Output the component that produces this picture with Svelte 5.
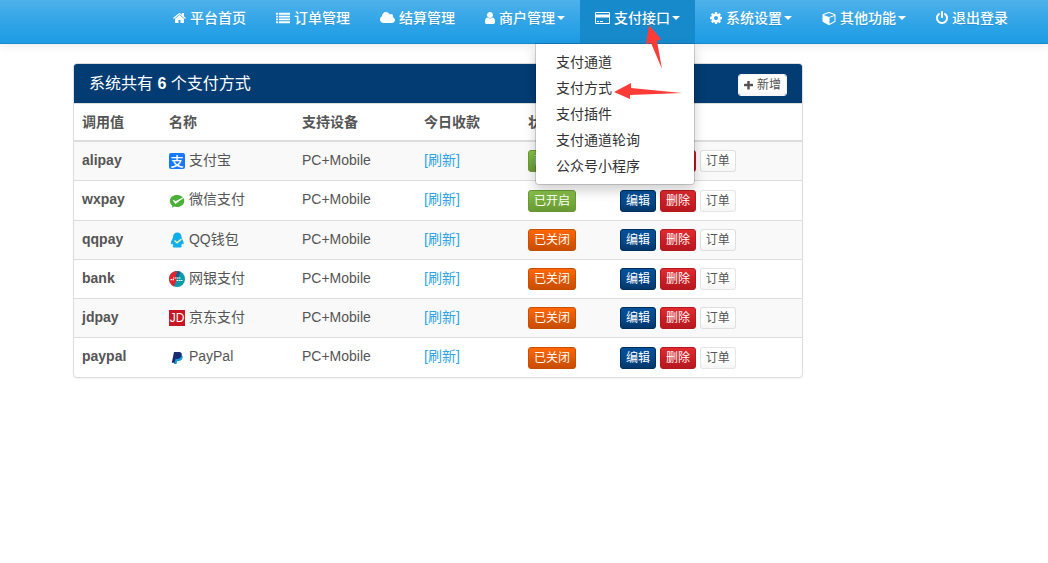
<script lang="ts">
  type Icon = { w: number; d: string };

  const icons: Record<string, Icon> = {
    home: { w: 13, d: 'M1472 992v480q0 26-19 45t-45 19h-384v-384h-256v384h-384q-26 0-45-19t-19-45v-480q0-1 .5-3t.5-3l575-474 575 474q1 2 1 6zm223-69l-62 74q-8 9-21 11h-3q-13 0-21-7l-692-577-692 577q-12 8-24 7-13-2-21-11l-62-74q-8-10-7-23.5t11-21.5l719-599q32-26 76-26t76 26l244 204v-195q0-14 9-23t23-9h192q14 0 23 9t9 23v408l219 182q10 8 11 21.5t-7 23.5z' },
    list: { w: 14, d: 'M0 192h256v256h-256zM384 192h1536v256h-1536zM0 576h256v256h-256zM384 576h1536v256h-1536zM0 960h256v256h-256zM384 960h1536v256h-1536zM0 1344h256v256h-256zM384 1344h1536v256h-1536z' },
    cloud: { w: 15, d: 'M1984 1152q0 159-112.5 271.5t-271.5 112.5h-1088q-185 0-316.5-131.5t-131.5-316.5q0-132 71-241.5t187-163.5q-2-28-2-43 0-212 150-362t362-150q158 0 286.5 88t187.5 230q70-62 166-62 106 0 181 75t75 181q0 75-41 138 129 30 213 134.5t84 239.5z' },
    user: { w: 10, d: 'M1536 1399q0 109-62.5 187t-150.5 78h-854q-88 0-150.5-78t-62.5-187q0-85 8.5-160.5t31.5-152 58.5-131 94-89 134.5-34.5q131 128 313 128t313-128q76 0 134.5 34.5t94 89 58.5 131 31.5 152 8.5 160.5zm-256-887q0 159-112.5 271.5t-271.5 112.5-271.5-112.5-112.5-271.5 112.5-271.5 271.5-112.5 271.5 112.5 112.5 271.5z' },
    card: { w: 15, d: 'M1760 128q66 0 113 47t47 113v1216q0 66-47 113t-113 47h-1600q-66 0-113-47t-47-113v-1216q0-66 47-113t113-47h1600zm-1600 128q-13 0-22.5 9.5t-9.5 22.5v224h1664v-224q0-13-9.5-22.5t-22.5-9.5h-1600zm1600 1280q13 0 22.5-9.5t9.5-22.5v-736h-1664v736q0 13 9.5 22.5t22.5 9.5h1600zM128 448h1664v384h-1664zm128 960v-128h256v128h-256zm384 0v-128h384v128h-384z' },
    cog: { w: 12, d: 'M1152 896q0-106-75-181t-181-75-181 75-75 181 75 181 181 75 181-75 75-181zm512-109v222q0 12-8 23t-20 13l-185 28q-19 54-39 91 35 50 107 138 10 12 10 25t-9 23q-27 37-99 108t-94 71q-12 0-26-9l-138-108q-44 23-91 38-16 136-29 186-7 28-36 28h-222q-14 0-24.5-8.5t-11.5-21.5l-28-184q-49-16-90-37l-141 107q-10 9-25 9-14 0-25-11-126-114-165-168-7-10-7-23 0-12 8-23 15-21 51-66.5t54-70.5q-27-50-41-99l-183-27q-13-2-21-12.5t-8-23.5v-222q0-12 8-23t19-13l186-28q14-46 39-92-40-57-107-138-10-12-10-24 0-10 9-23 26-36 98.5-107.5t94.5-71.5q13 0 26 10l138 107q44-23 91-38 16-136 29-186 7-28 36-28h222q14 0 24.5 8.5t11.5 21.5l28 184q49 16 90 37l142-107q9-9 24-9 13 0 25 10 129 119 165 170 7 8 7 22 0 12-8 23-15 21-51 66.5t-54 70.5q26 50 41 98l183 28q13 2 21 12.5t8 23.5z' },
    cube: { w: 14, d: 'M896 1629l640-349v-636l-640 233v752zm-64-865l698-254-698-254-698 254zm832-252v768q0 35-18 65t-49 47l-704 384q-28 16-61 16t-61-16l-704-384q-31-17-49-47t-18-65v-768q0-40 23-73t61-47l704-256q22-8 44-8t44 8l704 256q38 14 61 47t23 73z' },
    power: { w: 12, d: 'M1664 896q0 156-61 298t-164 245-245 164-298 61-298-61-245-164-164-245-61-298q0-182 80.5-343t226.5-270q43-32 95.5-25t83.5 50q32 42 24.5 94.5t-49.5 84.5q-98 74-151.5 181t-53.5 228q0 104 40.5 198.5t109.5 163.5 163.5 109.5 198.5 40.5 198.5-40.5 163.5-109.5 109.5-163.5 40.5-198.5q0-121-53.5-228t-151.5-181q-42-32-49.5-84.5t24.5-94.5q31-43 84-50t95 25q146 109 226.5 270t80.5 343zm-640-768v640q0 52-38 90t-90 38-90-38-38-90v-640q0-52 38-90t90-38 90 38 38 90z' }
  };

  // left edge and width of each glyph in its 1792 unit em
  const boxes: Record<string, string> = {
    home: '64 0 1664 1792',
    list: '0 0 1920 1792',
    cloud: '64 0 1920 1792',
    user: '256 0 1280 1792',
    card: '0 0 1920 1792',
    cog: '128 0 1536 1792',
    cube: '0 0 1664 1792',
    power: '128 0 1536 1792'
  };

  const nav = [
    { label: '平台首页', icon: 'home' },
    { label: '订单管理', icon: 'list' },
    { label: '结算管理', icon: 'cloud' },
    { label: '商户管理', icon: 'user', caret: true },
    {
      label: '支付接口',
      icon: 'card',
      caret: true,
      menu: ['支付通道', '支付方式', '支付插件', '支付通道轮询', '公众号小程序']
    },
    { label: '系统设置', icon: 'cog', caret: true },
    { label: '其他功能', icon: 'cube', caret: true },
    { label: '退出登录', icon: 'power' }
  ];

  let openMenu = $state('支付接口');

  let types = $state([
    { key: 'alipay', name: '支付宝', device: 'PC+Mobile', on: true },
    { key: 'wxpay', name: '微信支付', device: 'PC+Mobile', on: true },
    { key: 'qqpay', name: 'QQ钱包', device: 'PC+Mobile', on: false },
    { key: 'bank', name: '网银支付', device: 'PC+Mobile', on: false },
    { key: 'jdpay', name: '京东支付', device: 'PC+Mobile', on: false },
    { key: 'paypal', name: 'PayPal', device: 'PC+Mobile', on: false }
  ]);
</script>

<nav class="navbar">
  <ul class="nav">
    {#each nav as item}
      <li class:open={item.label === openMenu}>
        <a href="#nav" class="nav-link" onclick={() => (openMenu = item.label)}>
          <svg class="fa" style="width: {icons[item.icon].w}px" viewBox={boxes[item.icon]} aria-hidden="true">
            <path d={icons[item.icon].d} />
          </svg>
          <span>{item.label}</span>
          {#if item.caret}<b class="caret"></b>{/if}
        </a>
        {#if item.menu && item.label === openMenu}
          <ul class="dropdown">
            {#each item.menu as entry}
              <li><a href="#menu">{entry}</a></li>
            {/each}
          </ul>
          <svg class="arrows" width="160" height="80" viewBox="535 0 160 80" aria-hidden="true">
            <path d="M649 25L661 39L657 41L662 69L651 43L646 44Z" />
          </svg>
          <svg class="arrows second" width="80" height="24" viewBox="610 80 80 24" aria-hidden="true">
            <path d="M614 92L631 83L631 88L682 93L630 95L630 99Z" />
          </svg>
        {/if}
      </li>
    {/each}
  </ul>
</nav>

<main>
  <section class="panel">
    <header class="panel-heading">
      <h3>系统共有 <b>{types.length}</b> 个支付方式</h3>
      <button class="btn default add">
        <svg class="plus" viewBox="192 192 1408 1408" aria-hidden="true">
          <path d="M1600 736v192q0 40-28 68t-68 28h-416v416q0 40-28 68t-68 28h-192q-40 0-68-28t-28-68v-416h-416q-40 0-68-28t-28-68v-192q0-40 28-68t68-28h416v-416q0-40 28-68t68-28h192q40 0 68 28t28 68v416h416q40 0 68 28t28 68z" />
        </svg>
        新增
      </button>
    </header>
    <table>
      <colgroup>
        <col class="c-key" />
        <col class="c-name" />
        <col class="c-device" />
        <col class="c-income" />
        <col class="c-state" />
        <col />
      </colgroup>
      <thead>
        <tr><th>调用值</th><th>名称</th><th>支持设备</th><th>今日收款</th><th>状态</th><th>操作</th></tr>
      </thead>
      <tbody>
        {#each types as t}
          <tr>
            <td><b>{t.key}</b></td>
            <td>
              <svg class="logo" viewBox="0 0 16 16" aria-hidden="true">
                {#if t.key === 'alipay'}
                  <rect width="16" height="16" rx="2" fill="#1677ff" />
                  <text x="8" y="13" text-anchor="middle" font-size="13" font-weight="500" fill="#fff">支</text>
                {:else if t.key === 'wxpay'}
                  <path d="M8 2C3.9 2 .8 4.600.8 8c0 1.900 1 3.500 2.500 4.500L3 14.700l2.400-1.200c.8.3 1.700.4 2.600.4 4.100 0 7.300-2.600 7.300-6S12.100 2 8 2z" fill="#4caf3a" />
                  <path d="M4.200 7.300l2.300 3.200L14.500 4.500 6.800 8.600z" fill="#fff" stroke="#fff" stroke-width=".8" />
                {:else if t.key === 'qqpay'}
                  <path d="M8.300.5C5.600.5 4 2.500 4 5.200c0 1.500-2.200 3.700-2.200 6 0 1.200.8 1.300 1.500.3.200.8.500 1.500 1.100 2.100-.9.300-1.200 1.900.6 1.900h6.400c1.700 0 1.500-1.600.7-1.900.6-.6.900-1.300 1.100-2.100.8 1 1.500.9 1.500-.3 0-2.300-2.100-4.500-2.100-6C12.600 2.500 11 .5 8.300.5z" fill="#10aeea" />
                  <path d="M5.500 8.500l2.500 2.200 4.500-3.500" fill="none" stroke="#e9efb0" stroke-width="1.500" />
                {:else if t.key === 'bank'}
                  <circle cx="8" cy="8" r="8" fill="#0b9aa8" />
                  <path d="M8 0A8 8 0 0 0 5 15.400L7.500 8z" fill="#e5212d" />
                  <path d="M8.500 0L6.500 6h3l2-5.200z" fill="#115d91" />
                  <path d="M1.500 8.600h4M4 7h8M7.500 9.500h6.500" stroke="#fff" stroke-width="1.200" stroke-dasharray="1.500 .5" />
                {:else if t.key === 'jdpay'}
                  <rect width="16" height="16" fill="#c91623" />
                  <text x="8" y="12" text-anchor="middle" font-size="12" fill="#fff">JD</text>
                {:else}
                  <path d="M6 5h5.500c2 0 2.500 1.500 2 3-.5 2-2 3-4 3H8.200l-.7 3H5z" fill="#179bd7" />
                  <path d="M5 2h5c2.300 0 3.200 1.300 2.700 3.300-.5 2.400-2.200 3.700-4.700 3.700H6.500l-.8 3.800H2.800z" fill="#172c70" />
                {/if}
              </svg>
              {t.name}
            </td>
            <td>{t.device}</td>
            <td><a href="#refresh">[刷新]</a></td>
            <td>
              <button class="btn {t.on ? 'success' : 'warning'}" onclick={() => (t.on = !t.on)}>{t.on ? '已开启' : '已关闭'}</button>
            </td>
            <td>
              <button class="btn primary">编辑</button>
              <button class="btn danger">删除</button>
              <button class="btn default">订单</button>
            </td>
          </tr>
        {/each}
      </tbody>
    </table>
  </section>
</main>

<style>
  :global(body) {
    background: #fff;
    color: #555;
    font-family: 'Liberation Sans', 'Noto Sans CJK SC', sans-serif;
    font-size: 14px;
    line-height: 20px;
  }

  a {
    color: #2fa4e7;
    text-decoration: none;
  }

  ul {
    list-style: none;
    margin: 0;
    padding: 0;
  }

  .navbar {
    display: flex;
    justify-content: flex-end;
    padding-right: 25px;
    background: linear-gradient(#4eb1ea, #2fa4e7 55%, #1d9ce5);
    border-bottom: 1px solid #178acc;
    box-shadow: 0 1px 10px rgba(0, 0, 0, 0.1);
  }

  .nav {
    display: flex;
  }
  .nav > li {
    position: relative;
  }
  .nav-link {
    display: flex;
    align-items: center;
    padding: 8px 15px 15px;
    color: #fff;
    font-weight: 500;
    white-space: nowrap;
    text-shadow: 0 1px 0 rgba(0, 0, 0, 0.1);
  }
  .open > .nav-link {
    background: #178acc;
  }

  .fa {
    height: 14px;
    margin-right: 4px;
    fill: #fff;
  }

  .caret {
    margin-left: 2px;
    border-top: 4px solid;
    border-left: 4px solid transparent;
    border-right: 4px solid transparent;
  }

  .dropdown {
    position: absolute;
    top: 100%;
    right: 0;
    z-index: 10;
    box-sizing: border-box;
    min-width: 160px;
    padding: 5px 0;
    background: #fff;
    background-clip: padding-box;
    border: 1px solid rgba(0, 0, 0, 0.15);
    border-radius: 0 0 4px 4px;
    box-shadow: 0 6px 12px rgba(0, 0, 0, 0.175);
  }
  .dropdown a {
    display: block;
    padding: 3px 20px;
    color: #333;
    white-space: nowrap;
  }
  .dropdown a:hover {
    background: #2fa4e7;
    color: #fff;
  }

  .arrows {
    position: absolute;
    top: 0;
    right: 0;
    z-index: 11;
    fill: #ff3b38;
    pointer-events: none;
  }
  .second {
    top: 80px;
    right: 5px;
  }

  main {
    padding: 19px 24px 20px 73px;
  }

  .panel {
    max-width: 728px;
    background: #fff;
    border: 1px solid #ddd;
    border-radius: 4px;
    box-shadow: 0 1px 1px rgba(0, 0, 0, 0.05);
  }

  .panel-heading {
    display: flex;
    align-items: flex-start;
    justify-content: space-between;
    padding: 10px 15px 7px;
    background: #033c73;
    border-bottom: 1px solid #ddd;
    border-radius: 3px 3px 0 0;
    color: #fff;
  }
  .panel-heading h3 {
    margin: 0;
    font-size: 16px;
    font-weight: 400;
  }

  table {
    width: 100%;
    table-layout: fixed;
    border-collapse: collapse;
  }
  .c-key {
    width: 87px;
  }
  .c-name {
    width: 133px;
  }
  .c-device {
    width: 122px;
  }
  .c-income {
    width: 104px;
  }
  .c-state {
    width: 92px;
  }
  th,
  td {
    padding: 8px;
    text-align: left;
    vertical-align: top;
    white-space: nowrap;
  }
  th {
    border-bottom: 2px solid #ddd;
  }
  td {
    border-top: 1px solid #ddd;
  }
  tbody tr:nth-child(odd) {
    background: #f9f9f9;
  }

  .logo {
    width: 16px;
    height: 16px;
    vertical-align: middle;
  }

  .btn {
    padding: 1px 5px;
    border: 1px solid;
    border-radius: 3px;
    color: #fff;
    font-family: inherit;
    font-size: 12px;
    line-height: 18px;
    vertical-align: middle;
    cursor: pointer;
  }
  .success {
    background: linear-gradient(#88c149, #73a839 60%, #699934);
    border-color: #699934;
  }
  .warning {
    background: linear-gradient(#ff6707, #dd5600 60%, #c94e00);
    border-color: #c94e00;
  }
  .primary {
    background: linear-gradient(#04519b, #044687 60%, #033769);
    border-color: #022f5a;
  }
  .danger {
    background: linear-gradient(#e12b31, #c71c22 60%, #b5191f);
    border-color: #b5191f;
  }
  .default {
    background: linear-gradient(#fff, #fff 60%, #f5f5f5) padding-box;
    border-color: rgba(0, 0, 0, 0.1);
    color: #555;
  }
  .add {
    display: flex;
    align-items: center;
    gap: 4px;
    border-color: #f5f5f5;
  }
  .plus {
    width: 9px;
    height: 9px;
    fill: #555;
  }
</style>
